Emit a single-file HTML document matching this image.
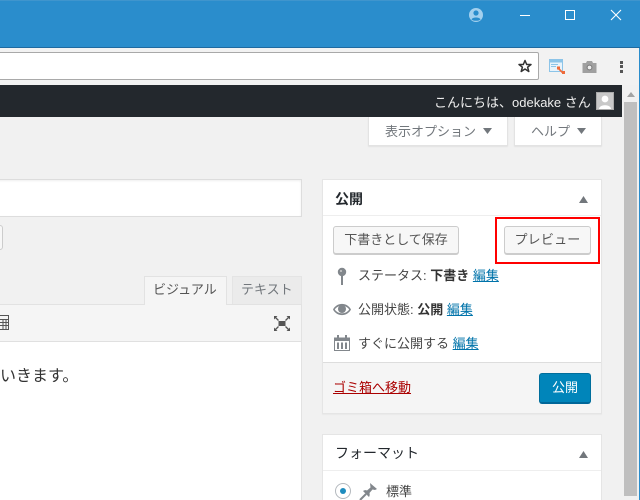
<!DOCTYPE html>
<html><head><meta charset="utf-8">
<style>
html,body{margin:0;padding:0;width:640px;height:500px;overflow:hidden;background:#f1f1f1}
body{position:relative;font-family:"Liberation Sans","Noto Sans CJK JP",sans-serif;font-size:13px;color:#444}
.a{position:absolute;box-sizing:border-box}
.t{position:absolute;white-space:nowrap;line-height:18px}
a,.l{color:#0073aa;text-decoration:underline}
b{font-weight:700;color:#333}
.btn{position:absolute;box-sizing:border-box;background:#f7f7f7;border:1px solid #ccc;border-radius:3px;box-shadow:0 1px 0 #ccc;text-align:center;color:#555;line-height:26px;white-space:nowrap}
svg{position:absolute;overflow:visible}
</style></head><body>
<div class="a" style="left:0;top:0;width:640px;height:48px;background:#2a8dcc;border-bottom:1px solid #1f6aa0;border-top:1px solid #3f95cd"></div>
<svg style="left:469px;top:8px" width="14" height="14" viewBox="0 0 14 14"><circle cx="7" cy="7" r="7" fill="#a3d0ee"/><circle cx="7" cy="5" r="2.6" fill="#2a8dcc"/><path d="M2.5 11.5C3.5 8.8 10.5 8.8 11.5 11.5C10 13.2 4 13.2 2.5 11.5Z" fill="#2a8dcc"/></svg>
<div class="a" style="left:520px;top:15px;width:10px;height:1px;background:#fff"></div>
<div class="a" style="left:565px;top:10px;width:10px;height:10px;border:1px solid #fff"></div>
<svg style="left:611px;top:10px" width="10" height="10"><path d="M0 0L10 10M10 0L0 10" stroke="#fff" stroke-width="1.1"/></svg>

<div class="a" style="left:0;top:48px;width:640px;height:37px;background:#f2f2f2"></div>
<div class="a" style="left:-5px;top:52px;width:544px;height:28px;background:#fff;border:1px solid #a9a9a9;border-radius:2px"></div>
<svg style="left:518px;top:59px" width="14" height="14" viewBox="0 0 14 13"><path d="M7 1L8.7 5H13L9.6 7.7L10.8 12L7 9.5L3.2 12L4.4 7.7L1 5H5.3Z" fill="#fff" stroke="#333" stroke-width="1.5" stroke-linejoin="round"/></svg>
<svg style="left:549px;top:59px" width="17" height="15" viewBox="0 0 17 15"><path d="M.5.5H13.5V12.5H.5Z" fill="#e8f3fb" stroke="#8cc4e8"/><path d="M1 1H13V3.5H1Z" fill="#8cc4e8"/><path d="M2 5.5H9M2 7.5H7" stroke="#8cc4e8"/><path d="M9 9L14 14" stroke="#ee6a3a" stroke-width="1.6"/><rect x="8" y="7.5" width="3" height="3" fill="#ee6a3a"/><rect x="13" y="12" width="3" height="3" fill="#ee6a3a"/></svg>
<svg style="left:582px;top:60px" width="15" height="13" viewBox="0 0 14 13"><path d="M0 3H3.5L4.5 1H9.5L10.5 3H14V13H0Z" fill="#a0a0a0"/><circle cx="7" cy="7.5" r="2.4" fill="#eee" stroke="#777"/></svg>
<div class="a" style="left:620px;top:61px;width:3px;height:3px;background:#555"></div>
<div class="a" style="left:620px;top:65px;width:3px;height:3px;background:#555"></div>
<div class="a" style="left:620px;top:70px;width:3px;height:3px;background:#555"></div>

<div class="a" style="left:0;top:85px;width:622px;height:32px;background:#23282d"></div>
<div class="t" style="left:434px;top:94px;color:#eee;font-size:13px">こんにちは、odekake さん</div>
<div class="a" style="left:596px;top:92px;width:18px;height:18px;background:#c8c8c8;border:1px solid #aaa"></div>
<svg style="left:597px;top:93px" width="16" height="16" viewBox="0 0 16 16"><circle cx="8" cy="6" r="3.4" fill="#fff"/><path d="M2 16C2 11 14 11 14 16Z" fill="#fff"/></svg>

<div class="a" style="left:622px;top:85px;width:17px;height:415px;background:#f1f1f1"></div>
<svg style="left:627px;top:92px" width="8" height="5"><path d="M0 5L4 0L8 5Z" fill="#a3a3a3"/></svg>
<div class="a" style="left:624px;top:102px;width:13px;height:394px;background:#bfbfbf"></div>
<div class="a" style="left:639px;top:48px;width:1px;height:452px;background:#2a8dcc"></div>

<div class="a" style="left:368px;top:117px;width:140px;height:29px;background:#fff;border:1px solid #e3e3e3;border-top:0;box-shadow:0 1px 1px rgba(0,0,0,.06)"></div>
<div class="t" style="left:385px;top:123px;color:#72777c;font-size:13px">表示オプション</div>
<svg style="left:483px;top:128px" width="9" height="6"><path d="M0 0H9L4.5 6Z" fill="#72777c"/></svg>
<div class="a" style="left:514px;top:117px;width:88px;height:29px;background:#fff;border:1px solid #e3e3e3;border-top:0;box-shadow:0 1px 1px rgba(0,0,0,.06)"></div>
<div class="t" style="left:531px;top:123px;color:#72777c;font-size:13px">ヘルプ</div>
<svg style="left:577px;top:128px" width="9" height="6"><path d="M0 0H9L4.5 6Z" fill="#72777c"/></svg>

<div class="a" style="left:-5px;top:179px;width:307px;height:38px;background:#fff;border:1px solid #ddd;box-shadow:inset 0 1px 2px rgba(0,0,0,.07)"></div>
<div class="a" style="left:-10px;top:225px;width:13px;height:25px;background:#f7f7f7;border:1px solid #ccc;border-radius:3px"></div>

<div class="a" style="left:-5px;top:304px;width:307px;height:1px;background:#e2e2e2"></div>
<div class="a" style="left:144px;top:276px;width:83px;height:29px;background:#f5f5f5;border:1px solid #e2e2e2;border-bottom:0"></div>
<div class="t" style="left:153px;top:281px;color:#555;font-size:13px">ビジュアル</div>
<div class="a" style="left:232px;top:276px;width:70px;height:28px;background:#ebebeb;border:1px solid #e4e4e4;border-bottom:0"></div>
<div class="t" style="left:241px;top:281px;color:#72777c;font-size:13px">テキスト</div>
<div class="a" style="left:-5px;top:305px;width:307px;height:37px;background:#f5f5f5;border-right:1px solid #e2e2e2;border-bottom:1px solid #e0e0e0"></div>
<svg style="left:0;top:314px" width="10" height="17" viewBox="0 0 10 17"><path d="M0 1.5H8.5V15.5H0M0 5.5H8.5M0 8.5H8.5M0 11.5H8.5M3 5.5V15.5M6 5.5V15.5" fill="none" stroke="#555"/></svg>
<svg style="left:274px;top:316px" width="16" height="15" viewBox="0 0 16 15"><rect x="4.5" y="5" width="7" height="5" fill="#555"/><path d="M1 1L4.500 4.500M15 1L11.500 4.500M1 14L4.500 10.500M15 14L11.500 10.500" stroke="#555" stroke-width="1.3"/><path d="M0 0H3.500L0 3.500ZM16 0H12.500L16 3.500ZM0 15H3.500L0 11.500ZM16 15H12.500L16 11.500Z" fill="#555"/></svg>
<div class="a" style="left:-5px;top:342px;width:307px;height:158px;background:#fff;border-right:1px solid #e2e2e2"></div>
<div class="t" style="left:0;top:366px;font-size:16px;line-height:22px;color:#333">いきます。</div>

<div class="a" style="left:322px;top:179px;width:280px;height:235px;background:#fff;border:1px solid #e5e5e5;box-shadow:0 1px 1px rgba(0,0,0,.04)"></div>
<div class="a" style="left:323px;top:215px;width:278px;height:1px;background:#eee"></div>
<div class="t" style="left:335px;top:190px;font-size:14px;font-weight:700;color:#23282d">公開</div>
<svg style="left:579px;top:196px" width="9" height="7"><path d="M0 7L4.500 0L9 7Z" fill="#72777c"/></svg>
<div class="btn" style="left:333px;top:226px;width:126px;height:28px">下書きとして保存</div>
<div class="btn" style="left:504px;top:226px;width:87px;height:28px;letter-spacing:.2px">プレビュー</div>
<div class="a" style="left:495px;top:217px;width:105px;height:47px;border:2px solid #f00"></div>

<svg style="left:337px;top:267px" width="10" height="18" viewBox="0 0 10 18"><circle cx="5" cy="5" r="4.200" fill="#82878c"/><rect x="4" y="8" width="2" height="10" fill="#82878c"/><circle cx="4" cy="4" r="1" fill="#ccc"/></svg>
<div class="t" style="left:358px;top:267px">ステータス: <b>下書き</b> <a>編集</a></div>
<svg style="left:333px;top:303px" width="18" height="13" viewBox="0 0 18 13"><path d="M0 6.500C4 -1 14 -1 18 6.500C14 14 4 14 0 6.500ZM1.800 6.500C5 11.500 13 11.500 16.200 6.500C13 1.500 5 1.500 1.800 6.500Z" fill="#82878c" fill-rule="evenodd"/><circle cx="9" cy="6" r="4" fill="#82878c"/></svg>
<div class="t" style="left:358px;top:301px">公開状態: <b>公開</b> <a>編集</a></div>
<svg style="left:334px;top:335px" width="16" height="16" viewBox="0 0 16 16"><path d="M.5 3H15.500V15.500H.5Z" fill="#fff" stroke="#82878c"/><path d="M0 2.500H16V6H0Z" fill="#82878c"/><path d="M3 0H5V4H3ZM11 0H13V4H11Z" fill="#82878c"/><path d="M3 7.500H5V14H3ZM7 7.500H9V14H7ZM11 7.500H13V14H11Z" fill="#82878c"/></svg>
<div class="t" style="left:358px;top:335px">すぐに公開する <a>編集</a></div>

<div class="a" style="left:323px;top:362px;width:278px;height:51px;background:#f5f5f5;border-top:1px solid #ddd"></div>
<div class="t" style="left:333px;top:379px;color:#a00;text-decoration:underline">ゴミ箱へ移動</div>
<div class="a" style="left:539px;top:373px;width:52px;height:31px;background:#0085ba;border:1px solid #006e9c;border-bottom:2px solid #006799;border-radius:3px;color:#fff;text-align:center;line-height:27px">公開</div>

<div class="a" style="left:322px;top:434px;width:280px;height:70px;background:#fff;border:1px solid #e5e5e5"></div>
<div class="a" style="left:323px;top:470px;width:278px;height:1px;background:#eee"></div>
<div class="t" style="left:335px;top:444px;font-size:14px;color:#23282d">フォーマット</div>
<svg style="left:579px;top:451px" width="9" height="7"><path d="M0 7L4.500 0L9 7Z" fill="#72777c"/></svg>
<div class="a" style="left:335px;top:483px;width:16px;height:16px;border:1px solid #b4b9be;border-radius:50%;background:#fff"></div>
<div class="a" style="left:340px;top:488px;width:6px;height:6px;border-radius:50%;background:#1e8cbe"></div>
<svg style="left:360px;top:483px" width="17" height="17" viewBox="0 0 17 17"><path d="M10 0L17 6L15 7L12.500 6.500L9.500 10C10 12 9.500 13 9 14L3 8C4.500 7 6 7 7 7.500L10.500 4.500Z" fill="#82878c"/><path d="M6 11L0 17" stroke="#82878c" stroke-width="2"/></svg>
<div class="t" style="left:386px;top:483px">標準</div>
</body></html>
